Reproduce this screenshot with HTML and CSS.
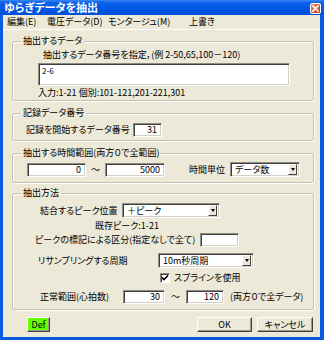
FILE: index.html
```html
<!DOCTYPE html>
<html lang="ja">
<head>
<meta charset="utf-8">
<title>ゆらぎデータを抽出</title>
<link rel="stylesheet" href="styles.css">
</head>
<body>
<div class="window">
  <div class="titlebar">
    <span class="title">ゆらぎデータを抽出</span>
    <svg class="close" width="11" height="11" viewBox="0 0 11 11">
      <defs>
        <linearGradient id="cg" x1="0" y1="0" x2="1" y2="1">
          <stop offset="0" stop-color="#F08A6A"/>
          <stop offset="1" stop-color="#C8321A"/>
        </linearGradient>
      </defs>
      <rect x="0.5" y="0.5" width="10" height="10" rx="1.5" fill="url(#cg)" stroke="#fff" stroke-width="1"/>
      <path d="M3 3 L8 8 M8 3 L3 8" stroke="#fff" stroke-width="1.6" stroke-linecap="square"/>
    </svg>
  </div>
  <div class="frame">
    <div class="menubar">
      <span class="menu m1">編集(E)</span>
      <span class="menu m2">電圧データ(D)</span>
      <span class="menu m3">モンタージュ(M)</span>
      <span class="menu m4">上書き</span>
    </div>

    <div class="group g1">
      <div class="gtitle">抽出するデータ</div>
      <div class="line desc">抽出するデータ番号を指定，(例 2-50,65,100－120)</div>
      <div class="field area">2-6</div>
      <div class="line note">入力:1-21 個別:101-121,201-221,301</div>
    </div>

    <div class="group g2">
      <div class="gtitle">記録データ番号</div>
      <div class="row r-rec">
        <span class="lbl w-rec">記録を開始するデータ番号</span>
        <div class="field num w29">31</div>
      </div>
    </div>

    <div class="group g3">
      <div class="gtitle">抽出する時間範囲(両方０で全範囲)</div>
      <div class="row r-time">
        <div class="field num w59">0</div>
        <span class="tilde w19">～</span>
        <div class="field num w60">5000</div>
        <span class="lbl w-unit">時間単位</span>
        <div class="combo w70"><span class="ctext">データ数</span><span class="cbtn"><i></i></span></div>
      </div>
    </div>

    <div class="group g4">
      <div class="gtitle">抽出方法</div>
      <div class="row r1">
        <span class="lbl w82">結合するピーク位置</span>
        <div class="combo w98"><span class="ctext">＋ピーク</span><span class="cbtn"><i></i></span></div>
      </div>
      <div class="line r2">既存ピーク:1-21</div>
      <div class="row r3">
        <span class="lbl w165">ピークの標記による区分(指定なしで全て)</span>
        <div class="field num w39"></div>
      </div>
      <div class="row r4">
        <span class="lbl w120">リサンプリングする周期</span>
        <div class="combo w96"><span class="ctext">10m秒周期</span><span class="cbtn"><i></i></span></div>
      </div>
      <div class="row r5">
        <span class="check"><svg width="8" height="8" viewBox="0 0 8 8"><path d="M1 3.5 L3 5.5 L7 1.5" stroke="#000" stroke-width="1.6" fill="none"/></svg></span>
        <span class="lbl">スプラインを使用</span>
      </div>
      <div class="row r6">
        <span class="lbl w83">正常範囲(心拍数)</span>
        <div class="field num w42">30</div>
        <span class="tilde w21">～</span>
        <div class="field num w38">120</div>
        <span class="lbl hint">(両方０で全データ)</span>
      </div>
    </div>

    <div class="buttons">
      <button class="btn def">Def</button>
      <button class="btn ok">OK</button>
      <button class="btn cancel">キャンセル</button>
    </div>
  </div>
</div>
</body>
</html>
```
FILE: styles.css
```css
* { box-sizing: border-box; }
html, body { margin: 0; padding: 0; }
body {
  width: 324px;
  height: 340px;
  overflow: hidden;
  font-family: "Noto Sans CJK JP", "Noto Sans", sans-serif;
  font-size: 9px;
  font-feature-settings: "palt";
  color: #000;
  background: #0A5CE4;
}
.window {
  width: 324px;
  height: 340px;
  display: flex;
  flex-direction: column;
}
.titlebar {
  height: 15px;
  flex: none;
  display: flex;
  align-items: center;
  justify-content: space-between;
  padding: 0 3px 0 4px;
  background: linear-gradient(#3A86F4 0, #0C62EA 18%, #0057E6 55%, #0050D8 100%);
}
.title {
  color: #fff;
  font-weight: bold;
  font-size: 11px;
  line-height: 13px;
}
.close { display: block; margin-top: 1px; }
.frame {
  flex: 1;
  display: flex;
  flex-direction: column;
  background: #ECE9D8;
  border-left: 3px solid #0A5CE4;
  border-right: 4px solid #0A5CE4;
  border-bottom: 3px solid #0A58DC;
}
.menubar {
  height: 15px;
  flex: none;
  display: flex;
  align-items: center;
  padding-left: 4px;
  border-bottom: 1px solid #fff;
}
.menu { line-height: 12px; white-space: nowrap; }
.m1 { width: 40px; }
.m2 { width: 61px; }
.m3 { width: 81px; }

.group {
  border: 1px solid #C2BFB1;
  border-radius: 3px;
  box-shadow: inset 1px 1px 0 #fff, 1px 1px 0 #fff;
  margin-left: 9px;
  margin-right: 6px;
  display: flex;
  flex-direction: column;
  align-items: flex-start;
}
.gtitle {
  margin: -7px 0 0 8px;
  padding: 0 2px;
  line-height: 12px;
  background: #ECE9D8;
  white-space: nowrap;
}
.line { line-height: 12px; white-space: nowrap; }
.row {
  display: flex;
  align-items: center;
  white-space: nowrap;
}
.lbl { line-height: 12px; white-space: nowrap; flex: none; }
.tilde { text-align: center; line-height: 12px; flex: none; }

.g1 { margin-top: 11px; padding-bottom: 1px; }
.g1 .desc { margin: 2px 0 0 30px; }
.g1 .area { margin: 2px 0 0 25px; width: 252px; height: 23px; padding: 2px 3px; font-size: 8px; line-height: 10px; }
.g1 .note { margin: 1px 0 0 25px; }

.g2 { margin-top: 12px; padding-bottom: 3px; }
.r-rec { margin: 4px 0 0 13px; }
.w-rec { width: 107px; }

.g3 { margin-top: 12px; padding-bottom: 5px; }
.r-time { margin: 3px 0 0 14px; height: 15px; }
.w-unit { width: 41px; margin-left: 24px; }

.g4 { margin-top: 10px; padding-bottom: 5px; }
.r1 { margin: 4px 0 0 27px; }
.r2 { margin: 2px 0 0 82px; }
.r3 { margin: 1px 0 0 22px; }
.r4 { margin: 6px 0 0 25px; }
.r5 { margin: 4px 0 0 147px; height: 12px; }
.r6 { margin: 6px 0 0 27px; }
.hint { margin-left: 6px; }

.w19 { width: 19px; }
.w21 { width: 21px; }
.w29 { width: 29px; }
.w38 { width: 38px; }
.w39 { width: 39px; }
.w42 { width: 42px; }
.w59 { width: 59px; }
.w60 { width: 60px; }
.w70 { width: 70px; }
.w82 { width: 82px; }
.w83 { width: 83px; }
.w96 { width: 96px; }
.w98 { width: 98px; }
.w120 { width: 120px; }
.w165 { width: 165px; }

.field, .combo {
  flex: none;
  background: #fff;
  border: 1px solid;
  border-color: #8E8B80 #fff #fff #8E8B80;
  box-shadow: inset 1px 1px 0 #404040, inset -1px -1px 0 #D4D0C8;
}
.num {
  height: 14px;
  line-height: 12px;
  text-align: right;
  padding: 0 4px 0 2px;
}
.combo {
  height: 15px;
  display: flex;
  align-items: center;
  padding: 2px;
}
.ctext { flex: 1; line-height: 11px; padding-left: 2px; white-space: nowrap; }
.cbtn {
  width: 9px;
  height: 11px;
  flex: none;
  background: #ECE9D8;
  border: 1px solid;
  border-color: #fff #404040 #404040 #fff;
  display: flex;
  align-items: center;
  justify-content: center;
}
.cbtn i {
  display: block;
  width: 0;
  height: 0;
  border-left: 2.5px solid transparent;
  border-right: 2.5px solid transparent;
  border-top: 3px solid #000;
}
.check {
  width: 10px;
  height: 10px;
  margin-right: 4px;
  background: #fff;
  border: 1px solid;
  border-color: #8E8B80 #fff #fff #8E8B80;
  box-shadow: inset 1px 1px 0 #404040;
  display: flex;
  align-items: center;
  justify-content: center;
  flex: none;
}
.check svg { display: block; }

.buttons {
  display: flex;
  margin-top: 7px;
  padding-left: 24px;
  height: 15px;
}
.btn {
  font-family: inherit;
  font-size: 9px;
  font-feature-settings: "palt";
  height: 15px;
  padding: 0;
  margin: 0;
  line-height: 11px;
  color: #000;
  background: #ECE9D8;
  border: 1px solid;
  border-color: #fff #404040 #404040 #fff;
  box-shadow: inset -1px -1px 0 #9C998C;
  border-radius: 0;
}
.def { width: 23px; background: #66FF00; }
.ok { width: 55px; margin-left: 147px; }
.cancel { width: 56px; margin-left: 5px; }
```
